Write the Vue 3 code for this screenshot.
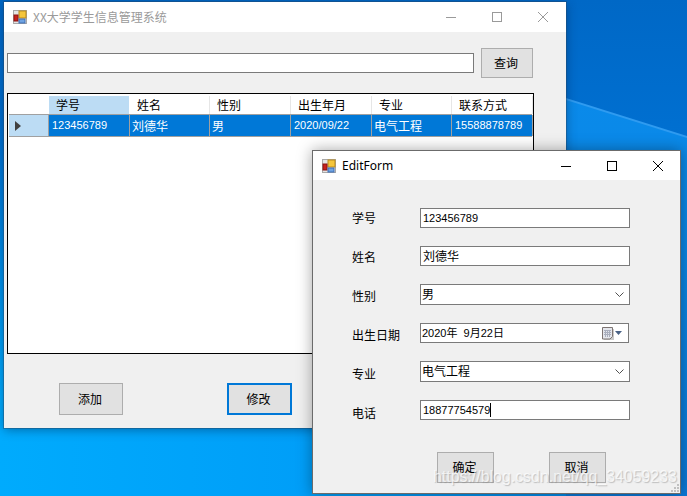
<script setup>
const columns = [
  { title: '学号', value: '123456789', latin: true, width: 81, selected: true },
  { title: '姓名', value: '刘德华', width: 80 },
  { title: '性别', value: '男', width: 81 },
  { title: '出生年月', value: '2020/09/22', latin: true, width: 81 },
  { title: '专业', value: '电气工程', width: 80 },
  { title: '联系方式', value: '15588878789', latin: true, width: 81 }
]
const fields = [
  { label: '学号', value: '123456789', kind: 'text' },
  { label: '姓名', value: '刘德华', kind: 'cjk' },
  { label: '性别', value: '男', kind: 'combo' },
  { label: '出生日期', value: '2020年  9月22日', kind: 'date' },
  { label: '专业', value: '电气工程', kind: 'combo' },
  { label: '电话', value: '18877754579', kind: 'phone' }
]
</script>

<template>
  <div class="desktop">
    <div class="ray"></div>

    <section class="window main-window">
      <header class="titlebar inactive">
        <svg class="app-icon" viewBox="0 0 14 14" width="14" height="14">
          <rect x="0.5" y="0.5" width="13" height="13" fill="#e4e4e4" stroke="#a8a8a8" />
          <rect x="6" y="1" width="7" height="7" fill="#f5c63c" stroke="#b98a1c" />
          <rect x="1" y="5" width="4" height="6" fill="#c8201c" stroke="#8a1512" />
          <rect x="6" y="9" width="6" height="4" fill="#6fa3e2" stroke="#3f6fb5" />
        </svg>
        <span class="title">XX大学学生信息管理系统</span>
        <div class="controls">
          <svg viewBox="0 0 46 10" width="46" height="10"><path d="M0 5.5H10" /></svg>
          <svg viewBox="0 0 46 10" width="46" height="10"><rect x="0.5" y="0.5" width="9" height="9" /></svg>
          <svg viewBox="0 0 10 10" width="10" height="10"><path d="M0 0L10 10M10 0L0 10" /></svg>
        </div>
      </header>

      <div class="main-body">
        <div class="search-row">
          <div class="search-box"></div>
          <button class="btn query">查询</button>
        </div>

        <div class="grid-view">
          <div class="grid-row header-row">
            <div class="corner"></div>
            <div
              v-for="c in columns"
              :key="c.title"
              class="head-cell"
              :class="{ selected: c.selected }"
              :style="{ width: c.width + 'px' }"
            >{{ c.title }}</div>
          </div>
          <div class="grid-row data-row">
            <div class="row-head"><span class="arrow"></span></div>
            <div
              v-for="c in columns"
              :key="c.title"
              class="data-cell"
              :class="{ latin: c.latin }"
              :style="{ width: c.width + 'px' }"
            >{{ c.value }}</div>
          </div>
        </div>

        <div class="action-row">
          <button class="btn add">添加</button>
          <button class="btn edit">修改</button>
        </div>
      </div>
    </section>

    <section class="window edit-window">
      <header class="titlebar">
        <svg class="app-icon" viewBox="0 0 14 14" width="14" height="14">
          <rect x="0.5" y="0.5" width="13" height="13" fill="#e4e4e4" stroke="#a8a8a8" />
          <rect x="6" y="1" width="7" height="7" fill="#f5c63c" stroke="#b98a1c" />
          <rect x="1" y="5" width="4" height="6" fill="#c8201c" stroke="#8a1512" />
          <rect x="6" y="9" width="6" height="4" fill="#6fa3e2" stroke="#3f6fb5" />
        </svg>
        <span class="title form-title">EditForm</span>
        <div class="controls">
          <svg viewBox="0 0 46 10" width="46" height="10"><path d="M0 5.5H10" /></svg>
          <svg viewBox="0 0 46 10" width="46" height="10"><rect x="0.5" y="0.5" width="9" height="9" /></svg>
          <svg viewBox="0 0 10 10" width="10" height="10"><path d="M0 0L10 10M10 0L0 10" /></svg>
        </div>
      </header>

      <div class="edit-body">
        <div class="form-columns">
          <div class="label-column">
            <label v-for="f in fields" :key="f.label" class="field-label">{{ f.label }}</label>
          </div>
          <div class="field-column">
            <div v-for="f in fields" :key="f.label" class="field" :class="'field-' + f.kind">
              <span class="field-value">{{ f.value }}</span>
              <span v-if="f.kind === 'phone'" class="caret"></span>
              <svg v-if="f.kind === 'combo'" class="chevron" viewBox="0 0 9 5" width="9" height="5">
                <path d="M0.5 0.5L4.5 4.5L8.5 0.5" />
              </svg>
              <span v-if="f.kind === 'date'" class="date-tools">
                <svg viewBox="0 0 12 13" width="12" height="13">
                  <path d="M2 2H12V13H2Z" fill="#c9c9c9" />
                  <path d="M0.5 0.5H10.5V9.5L8 12H0.5Z" fill="#e4e6ec" stroke="#7d7472" />
                  <path d="M2 3.5H9M2 5.5H9M2 7.5H9M3.5 3V10M5.5 3V10M7.5 3V10" stroke="#a9aebd" fill="none" />
                </svg>
                <svg viewBox="0 0 7 4" width="7" height="4"><path d="M0 0H7L3.5 4Z" fill="#4a6286" /></svg>
              </span>
            </div>
          </div>
        </div>
        <div class="form-buttons">
          <button class="btn ok">确定</button>
          <button class="btn cancel">取消</button>
        </div>
        <svg class="grip" viewBox="0 0 10 10" width="10" height="10">
          <path d="M7 1h2v2H7zM4 4h2v2H4zM7 4h2v2H7zM1 7h2v2H1zM4 7h2v2H4zM7 7h2v2H7z" fill="#c0c0c0" />
        </svg>
      </div>
    </section>

    <div class="watermark">https://blog.csdn.net/qq_34059233</div>
  </div>
</template>

<style>
html, body { margin: 0; padding: 0; overflow: hidden; }
</style>

<style scoped>
.desktop {
  position: relative;
  width: 687px;
  height: 496px;
  overflow: hidden;
  font: 12px "Noto Sans CJK SC", "Liberation Sans", sans-serif;
  color: #000;
  background:
    linear-gradient(180deg, #0068c6 0%, #006fd0 25%, rgba(0, 120, 215, 0) 80%),
    linear-gradient(to right, #00abfd 0%, #009ef8 45%, #0080e0 100%);
}
.ray {
  position: absolute;
  left: 566px;
  top: 98px;
  width: 121px;
  height: 398px;
  background: #2f9bf0;
  clip-path: polygon(0 0, 100% 38px, 100% 100%, 0 100%);
}
.ray::after {
  content: "";
  position: absolute;
  inset: 0;
  background: linear-gradient(180deg, #0a8aea 0%, #0a86e4 40%, #0a78d6 100%);
  clip-path: polygon(0 2px, 100% 40px, 100% 100%, 0 100%);
}
.window {
  position: absolute;
  box-sizing: border-box;
  background: #f0f0f0;
  display: flex;
  flex-direction: column;
}
.main-window {
  left: 4px;
  top: 2px;
  width: 562px;
  height: 426px;
  box-shadow: 0 0 0 1px rgba(40, 70, 100, 0.4), 0 2px 10px rgba(0, 30, 70, 0.45);
}
.edit-window {
  left: 312px;
  top: 150px;
  width: 369px;
  height: 344px;
  border: 1px solid #6b6b6b;
  box-shadow: 0 0 14px rgba(0, 0, 0, 0.35);
}
.titlebar {
  flex: none;
  height: 30px;
  background: #fff;
  display: flex;
  align-items: center;
  padding: 0 18px 0 9px;
  color: #000;
}
.edit-window .titlebar { height: 29px; padding-right: 17px; }
.titlebar.inactive { color: #9a9a9a; }
.app-icon { flex: none; margin-right: 6px; }
.title { line-height: 16px; }
.form-title { font-family: "Noto Sans", sans-serif; font-size: 12px; }
.controls {
  margin-left: auto;
  display: flex;
  align-items: center;
}
.controls svg { display: block; overflow: visible; }
.controls path, .controls rect { fill: none; stroke: currentColor; stroke-width: 1; }

.main-body {
  flex: 1;
  display: flex;
  flex-direction: column;
  padding: 16px 33px 13px 3px;
}
.search-row {
  display: flex;
  align-items: center;
  gap: 7px;
}
.search-box {
  width: 467px;
  height: 20px;
  box-sizing: border-box;
  background: #fff;
  border: 1px solid #7a7a7a;
}
.btn {
  box-sizing: border-box;
  background: #e1e1e1;
  border: 1px solid #adadad;
  padding: 0 2px 2px 0;
  font: inherit;
  color: #000;
  display: flex;
  align-items: center;
  justify-content: center;
}
.query { width: 52px; height: 30px; }
.grid-view {
  margin-top: 15px;
  width: 527px;
  height: 261px;
  box-sizing: border-box;
  border: 1px solid #000;
  background: #fff;
  padding: 2px 1px 0;
}
.grid-row { display: flex; }
.corner, .row-head { width: 40px; flex: none; }
.header-row { height: 19px; border-bottom: 1px solid #a0a0a0; box-sizing: border-box; }
.head-cell {
  box-sizing: border-box;
  flex: none;
  padding-left: 7px;
  line-height: 18px;
  border-right: 1px solid #e6e6e6;
}
.head-cell.selected { background: #bcdcf4; border-right-color: #fff; }
.data-row { height: 22px; border-bottom: 1px solid #a0a0a0; box-sizing: border-box; }
.row-head {
  box-sizing: border-box;
  background: #bcdcf4;
  border-right: 1px solid #a0a0a0;
  display: flex;
  align-items: center;
  padding-left: 6px;
}
.arrow {
  width: 0;
  height: 0;
  border-left: 6px solid #404040;
  border-top: 5px solid transparent;
  border-bottom: 5px solid transparent;
}
.data-cell {
  box-sizing: border-box;
  flex: none;
  background: #0078d7;
  color: #fff;
  padding-left: 2px;
  line-height: 21px;
  border-right: 1px solid #a0a0a0;
  white-space: nowrap;
  overflow: hidden;
}
.data-cell.latin { font-family: "Liberation Sans", sans-serif; font-size: 11px; padding-left: 3px; }
.action-row {
  display: flex;
  gap: 104px;
  margin-top: 29px;
  padding-left: 52px;
}
.add { width: 64px; height: 32px; }
.edit { width: 65px; height: 32px; border: 2px solid #0078d7; }

.edit-body {
  position: relative;
  flex: 1;
  padding: 28px 0 0 39px;
}
.form-columns { display: flex; }
.label-column { width: 68px; flex: none; display: flex; flex-direction: column; }
.field-label { display: block; height: 39px; line-height: 20px; }
.field-column {
  width: 210px;
  flex: none;
  display: grid;
  grid-template-rows: 38px 38px 39px 38px 39px 20px;
  align-items: start;
}
.field {
  box-sizing: border-box;
  height: 20px;
  background: #fff;
  border: 1px solid #7a7a7a;
  display: flex;
  align-items: center;
  padding-left: 1px;
  line-height: 16px;
}
.field-combo { height: 21px; padding-bottom: 1px; }
.field-date { width: 209px; }
.field-text, .field-phone, .field-cjk { padding-left: 2px; }
.field-text .field-value, .field-phone .field-value, .field-date .field-value {
  font-family: "Liberation Sans", "Noto Sans CJK SC", sans-serif;
  font-size: 11px;
}
.field-value { white-space: pre; }
.caret { width: 1px; height: 14px; background: #000; }
.chevron { margin-left: auto; margin-right: 5px; fill: none; stroke: #505050; }
.date-tools {
  margin-left: auto;
  margin-right: 6px;
  display: flex;
  align-items: center;
  gap: 1px;
}
.form-buttons {
  display: flex;
  gap: 55px;
  margin-top: 10px;
  padding-left: 85px;
}
.ok, .cancel { width: 57px; height: 31px; }
.grip { position: absolute; right: 0; bottom: 0; }
.watermark {
  position: absolute;
  left: 433px;
  top: 468px;
  font: 15.9px "Liberation Sans", sans-serif;
  color: rgba(255, 255, 255, 0.72);
  text-shadow: 1px 1px 1px rgba(130, 130, 130, 0.45);
  white-space: nowrap;
}
</style>
